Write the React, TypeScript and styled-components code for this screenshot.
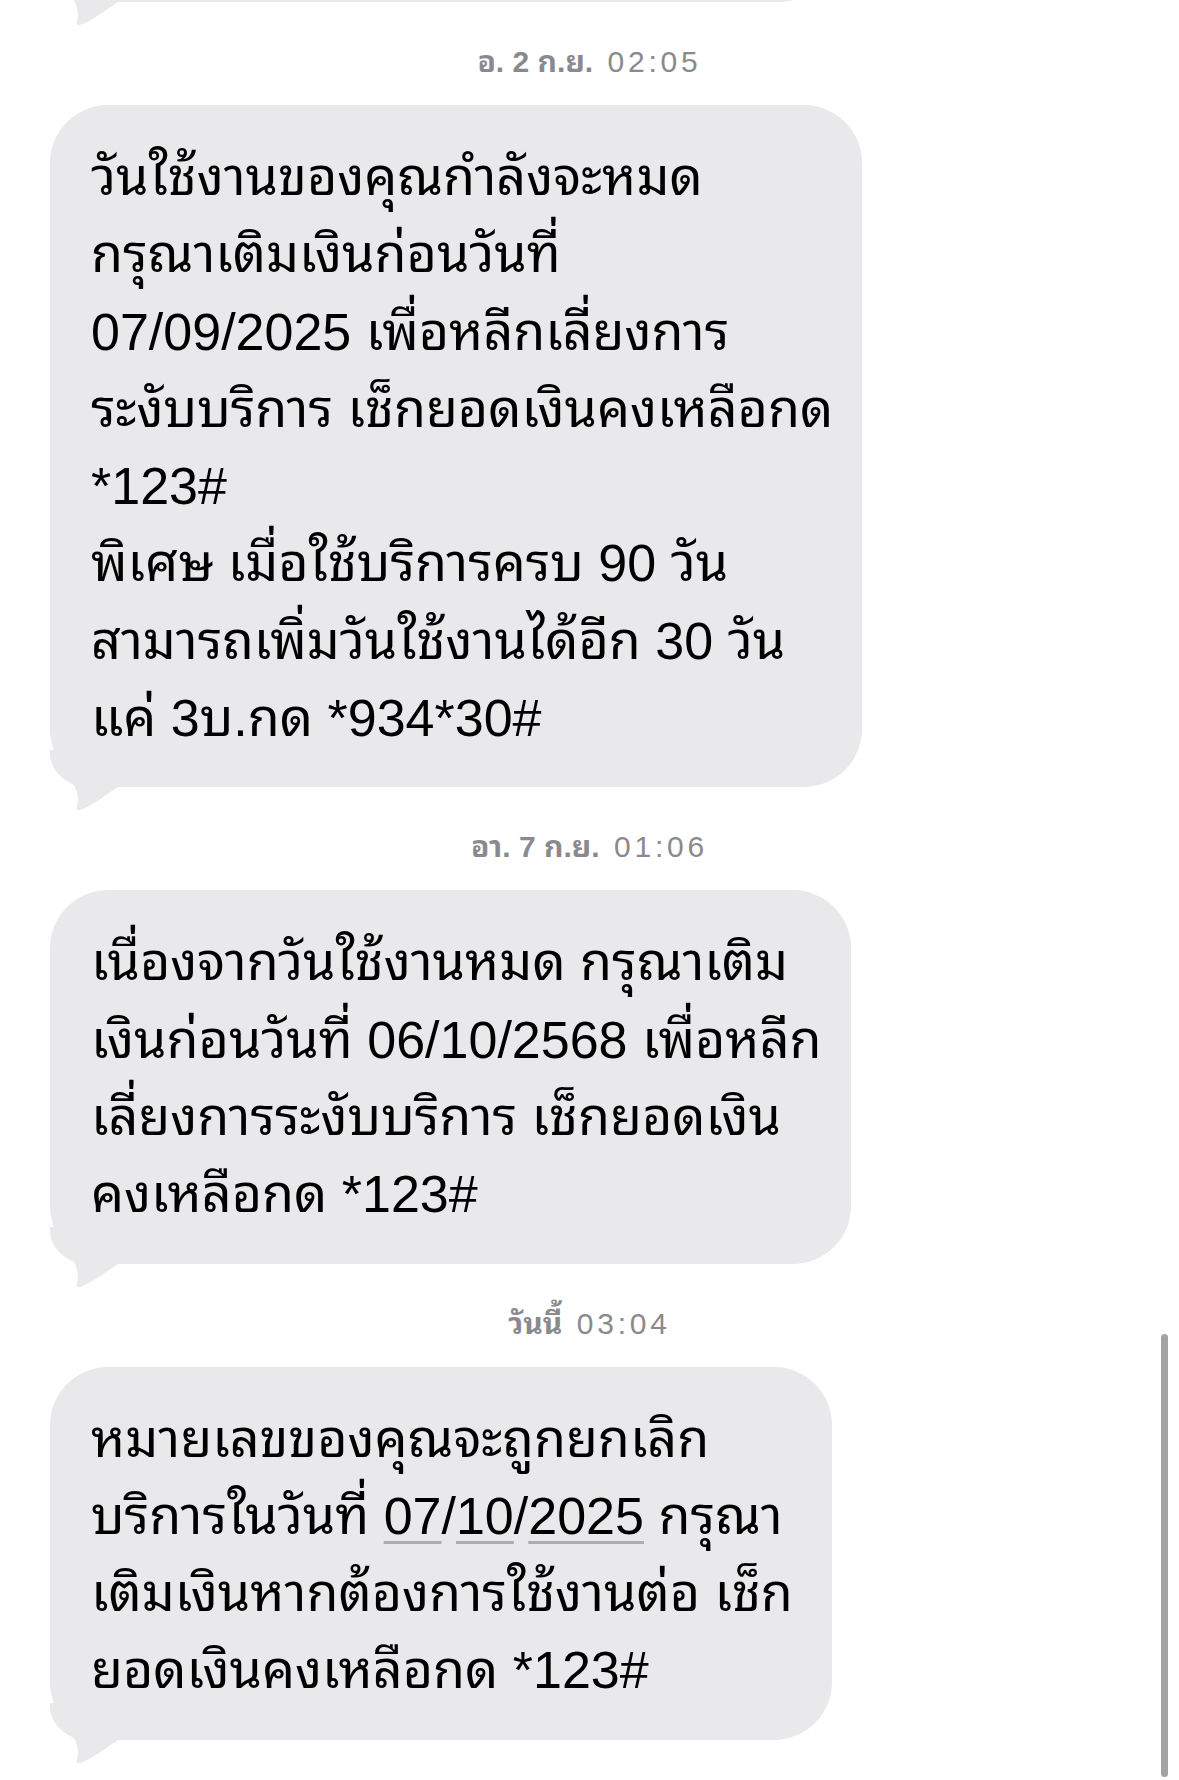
import React from "react";
import styled, { createGlobalStyle } from "styled-components";

const GlobalStyle = createGlobalStyle`
  html, body {
    margin: 0;
    padding: 0;
    background: #ffffff;
  }
  body {
    width: 1179px;
    height: 1780px;
    overflow: hidden;
    font-family: "Liberation Sans", "Noto Sans Thai Looped", "Loma", sans-serif;
    -webkit-font-smoothing: antialiased;
  }
`;

const Screen = styled.main`
  position: relative;
  width: 1179px;
  height: 1780px;
  overflow: hidden;
  background: #ffffff;
`;

const Thread = styled.div`
  display: flex;
  flex-direction: column;
  align-items: flex-start;
  padding-left: 50px;
`;

const Bubble = styled.div<{ $w: number; $cut?: number }>`
  position: relative;
  box-sizing: border-box;
  width: ${(p) => p.$w}px;
  ${(p) => (p.$cut ? `height: ${p.$cut + 2}px; margin-top: -${p.$cut}px;` : "")}
  padding: 34px 30px 30px 41px;
  background: #e9e9eb;
  border-radius: 58px;
  color: #000000;
  font-size: 52px;
  line-height: 77.3px;
`;

const Line = styled.span`
  position: relative;
  display: block;
  white-space: nowrap;
`;

const Detected = styled.span`
  text-decoration: underline;
  text-decoration-color: #adadb1;
  text-decoration-thickness: 3px;
  text-underline-offset: 7px;
  text-decoration-skip-ink: none;
`;

const TailSvg = styled.svg`
  position: absolute;
  left: 0;
  bottom: -25px;
  display: block;
`;

const Stamp = styled.div`
  align-self: stretch;
  margin: 40px 50px 23px 0;
  text-align: center;
  font-size: 30px;
  line-height: 40px;
  color: #8a8a8e;
  white-space: nowrap;
`;

const StampDay = styled.span`
  font-weight: 700;
`;

const StampTime = styled.span`
  margin-left: 6px;
  letter-spacing: 3.8px;
`;

const ScrollIndicator = styled.div`
  position: absolute;
  right: 11px;
  bottom: 3px;
  width: 7px;
  height: 443px;
  border-radius: 4px;
  background: #a3a3a3;
`;

const Tail = () => (
  <TailSvg width="70" height="62" viewBox="0 -37 70 62" aria-hidden="true">
    <path
      d="M0 -37 L0 -34 C0 -16 14 -7 24 -2 C28 6 29 14 27 19 C26 22 27 24 30 23 C42 19 54 9 68 0 L68 -37 Z"
      fill="#e9e9eb"
    />
  </TailSvg>
);

const DateText = ({ parts }: { parts: string[] }) => (
  <>
    {parts.map((p, i) => (
      <React.Fragment key={i}>
        {i > 0 && "/"}
        <Detected>{p}</Detected>
      </React.Fragment>
    ))}
  </>
);

type Msg = { day: string; time: string; width: number; lines: React.ReactNode[] };

const messages: Msg[] = [
  {
    day: "อ. 2 ก.ย.",
    time: "02:05",
    width: 812,
    lines: [
      "วันใช้งานของคุณกำลังจะหมด",
      "กรุณาเติมเงินก่อนวันที่",
      "07/09/2025 เพื่อหลีกเลี่ยงการ",
      "ระงับบริการ เช็กยอดเงินคงเหลือกด",
      "*123#",
      "พิเศษ เมื่อใช้บริการครบ 90 วัน",
      "สามารถเพิ่มวันใช้งานได้อีก 30 วัน",
      "แค่ 3บ.กด *934*30#",
    ],
  },
  {
    day: "อา. 7 ก.ย.",
    time: "01:06",
    width: 801,
    lines: [
      "เนื่องจากวันใช้งานหมด กรุณาเติม",
      "เงินก่อนวันที่ 06/10/2568 เพื่อหลีก",
      "เลี่ยงการระงับบริการ เช็กยอดเงิน",
      "คงเหลือกด *123#",
    ],
  },
  {
    day: "วันนี้",
    time: "03:04",
    width: 782,
    lines: [
      "หมายเลขของคุณจะถูกยกเลิก",
      <>
        บริการในวันที่ <DateText parts={["07", "10", "2025"]} /> กรุณา
      </>,
      "เติมเงินหากต้องการใช้งานต่อ เช็ก",
      "ยอดเงินคงเหลือกด *123#",
    ],
  },
];

export default function App() {
  return (
    <>
      <GlobalStyle />
      <Screen>
        <Thread>
          <Bubble $w={772} $cut={80}>
            <Tail />
          </Bubble>
          {messages.map((m, i) => (
            <React.Fragment key={i}>
              <Stamp>
                <StampDay>{m.day}</StampDay> <StampTime>{m.time}</StampTime>
              </Stamp>
              <Bubble $w={m.width}>
                <Tail />
                {m.lines.map((l, j) => (
                  <Line key={j}>{l}</Line>
                ))}
              </Bubble>
            </React.Fragment>
          ))}
        </Thread>
        <ScrollIndicator />
      </Screen>
    </>
  );
}
